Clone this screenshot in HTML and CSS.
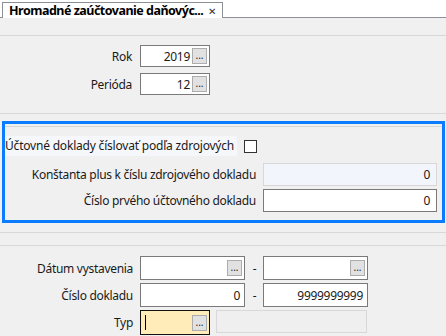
FILE: index.html
```html
<!DOCTYPE html>
<html lang="sk">
<head>
  <meta charset="UTF-8">
  <title>Hromadné zaúčtovanie daňových dokladov</title>
  <link rel="stylesheet" href="styles.css">
</head>
<body>
  <div class="tabbar">
    <div class="tab">
      <span class="tab-title">Hromadné zaúčtovanie daňovýc...</span>
      <span class="tab-close">✕</span>
    </div>
  </div>
  <div class="strip"></div>

  <section class="group top">
    <label class="lbl">Rok</label>
    <div class="field short"><span class="val">2019</span><button class="dots">...</button></div>
    <label class="lbl">Perióda</label>
    <div class="field short"><span class="val">12</span><button class="dots">...</button></div>
  </section>

  <section class="focusbox">
    <div class="inner">
      <div class="checkrow">
        <div class="checklbl">Účtovné doklady číslovať podľa zdrojových</div>
        <div class="checkbox"></div>
      </div>
      <div class="boxgrid">
        <label class="lbl">Konštanta plus k číslu zdrojového dokladu</label>
        <div class="field wide disabled"><span class="val">0</span></div>
        <label class="lbl">Číslo prvého účtovného dokladu</label>
        <div class="field wide"><span class="val">0</span></div>
      </div>
    </div>
  </section>

  <div class="sep first"></div>
  <div class="sep"></div>

  <section class="group bottom">
    <label class="lbl">Dátum vystavenia</label>
    <div class="field mid"><span class="val"></span><button class="dots">...</button></div>
    <span class="dash">-</span>
    <div class="field mid"><span class="val"></span><button class="dots">...</button></div>

    <label class="lbl">Číslo dokladu</label>
    <div class="field mid"><span class="val">0</span></div>
    <span class="dash">-</span>
    <div class="field mid"><span class="val">9999999999</span></div>

    <label class="lbl">Typ</label>
    <div class="typrow">
      <div class="field short active"><span class="caret"></span><span class="val"></span><button class="dots">...</button></div>
      <div class="field ghost"></div>
    </div>
  </section>
</body>
</html>
```

FILE: styles.css
```css
body {
  margin: 0;
  background-color: #f0f0f0;
  color: #1a1a1a;
  font-family: 'Noto Sans', sans-serif;
  font-size: 12px;
  letter-spacing: -0.3px;
  overflow: hidden;
}
.tabbar {
  height: 17px;
  background: #fff;
  border-bottom: 1px solid #8c9096;
  position: relative;
}
.tab {
  position: absolute;
  left: 2px;
  top: 2px;
  width: 221px;
  height: 16px;
  background: #fff;
  border: 1px solid #8c9096;
  border-bottom: none;
  display: flex;
  align-items: center;
  justify-content: space-between;
  box-sizing: border-box;
  padding: 0 6px 0 6px;
}
.tab-title {
  font-weight: bold;
  font-size: 12.5px;
  color: #000;
  letter-spacing: -0.5px;
  white-space: nowrap;
}
.tab-close {
  font-size: 10px;
  color: #333;
}
.strip {
  height: 17px;
  border-bottom: 1px solid #d8d8d8;
}
.group {
  display: grid;
  align-items: center;
}
.top {
  grid-template-columns: 132px auto;
  column-gap: 8px;
  row-gap: 6px;
  padding: 9px 0 18px;
  border-bottom: 1px solid #d8d8d8;
  justify-items: start;
}
.lbl {
  justify-self: end;
  text-align: right;
  white-space: nowrap;
}
.field {
  box-sizing: border-box;
  height: 22px;
  background: #fff;
  border: 1px solid #7a7a7a;
  display: flex;
  align-items: center;
  padding: 0 2px 0 4px;
}
.val {
  flex: 1;
  text-align: right;
  padding-right: 2px;
}
.short { width: 70px; }
.mid { width: 105px; height: 24px; }
.wide { width: 174px; height: 23px; padding-right: 4px; }
.dots {
  width: 15px;
  height: 16px;
  padding: 0;
  margin: 0;
  border: 1px solid #adadad;
  background: #e1e1e1;
  font-family: 'Noto Sans', sans-serif;
  font-size: 10px;
  line-height: 16px;
  color: #222;
  display: flex;
  align-items: flex-end;
  justify-content: center;
}
.focusbox {
  margin: 7px 1px 0 2px;
  border: 3px solid #0a7cff;
}
.inner {
  margin-top: 2px;
  border-top: 1px solid #d8d8d8;
  padding: 9px 5px 8px 0;
}
.checkrow {
  display: grid;
  grid-template-columns: 232px 13px;
  column-gap: 7px;
  align-items: center;
  margin-bottom: 7px;
}
.checklbl {
  background: #f5f7fb;
  height: 20px;
  line-height: 20px;
  font-size: 12px;
  letter-spacing: -0.2px;
  white-space: nowrap;
}
.checkbox {
  width: 13px;
  height: 13px;
  box-sizing: border-box;
  border: 1px solid #333;
  background: #fff;
}
.boxgrid {
  display: grid;
  grid-template-columns: 1fr 174px;
  column-gap: 7px;
  row-gap: 3px;
  align-items: center;
}
.disabled {
  background: #f2f6fc;
  border-color: #d8d8d8;
}
.sep {
  border-bottom: 1px solid #d8d8d8;
  height: 12px;
}
.sep.first { height: 9px; }
.bottom {
  grid-template-columns: 140px 105px 18px 105px;
  column-gap: 0;
  row-gap: 3px;
  padding-top: 10px;
}
.bottom .lbl { margin-right: 7px; }
.dash {
  text-align: center;
  padding-left: 1px;
}
.typrow {
  grid-column: 2 / span 3;
  display: flex;
  gap: 6px;
}
.active {
  background: #ffecb8;
  border-color: #111;
  height: 25px;
}
.caret {
  width: 1px;
  height: 15px;
  background: #000;
}
.ghost {
  width: 151px;
  height: 23px;
  background: #efefef;
  border-color: #d8d8d8;
}
```
